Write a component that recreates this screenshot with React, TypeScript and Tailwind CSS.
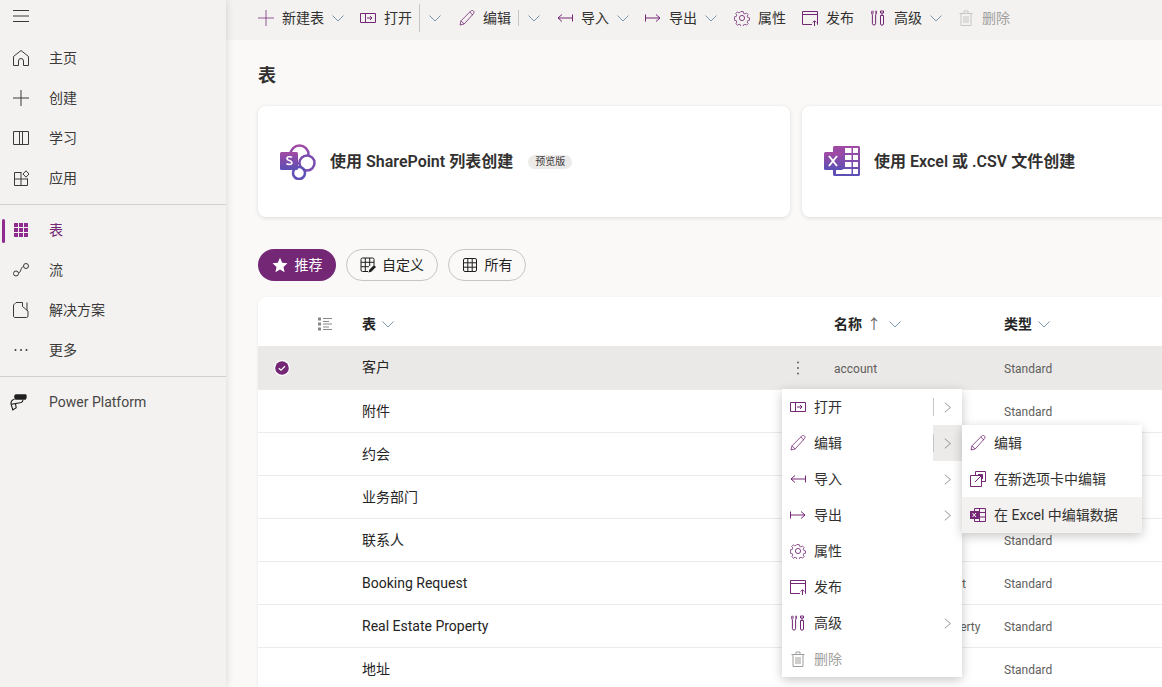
import React from 'react'

const P = '#742774'

type IconProps = { color?: string; className?: string }

const Svg = ({ children, className = 'w-4 h-4', size = 16 }: { children: React.ReactNode; className?: string; size?: number }) => (
  <svg viewBox={`0 0 ${size} ${size}`} fill="none" className={`${className} shrink-0`}>
    {children}
  </svg>
)

const Chevron = ({ className = 'w-3 h-3' }: { className?: string }) => (
  <svg viewBox="0 0 12 12" fill="none" className={`${className} shrink-0`}>
    <path d="M0.5 3.5 6 9l5.5-5.5" stroke="#6b8ea8" strokeWidth="0.9" />
  </svg>
)

const ChevronRight = () => (
  <svg viewBox="0 0 10 14" fill="none" className="w-[8px] h-[13px] shrink-0">
    <path d="M1 1l7 6-7 6" stroke="#7a7876" strokeWidth="1" />
  </svg>
)

const PlusIcon = ({ color = P }: IconProps) => (
  <Svg>
    <path d="M8 0v16M0 8h16" stroke={color} strokeOpacity="0.75" strokeWidth="1" />
  </Svg>
)
const OpenIcon = ({ color = P }: IconProps) => (
  <Svg>
    <path d="M.5 3.5h15v9H.5zM5.5 3.5v9" stroke={color} strokeWidth="1" />
    <path d="M7 8h5M10 6l2 2-2 2" stroke={color} strokeWidth="1" />
  </Svg>
)
const PencilIcon = ({ color = P }: IconProps) => (
  <Svg>
    <path d="M1 15l1-4.2L11.8 1c.8-.8 2-.8 2.7 0 .7.7.7 1.9 0 2.6L5.2 14 1 15zM2 10.8L5.2 14M10.8 2l3.2 3.2" stroke={color} strokeOpacity="0.8" strokeWidth="1" />
  </Svg>
)
const ImportIcon = ({ color = P }: IconProps) => (
  <Svg>
    <path d="M15.5 4.5v7M15 8H1M5 4.5L1 8l4 3.5" stroke={color} strokeWidth="1" />
  </Svg>
)
const ExportIcon = ({ color = P }: IconProps) => (
  <Svg>
    <path d="M.5 4.5v7M1 8h14M11 4.5L15 8l-4 3.5" stroke={color} strokeWidth="1" />
  </Svg>
)
const GearIcon = ({ color = P }: IconProps) => (
  <Svg>
    <circle cx="8" cy="8" r="2.6" stroke={color} strokeWidth="1" strokeOpacity="0.85" />
    <path
      d="M6.7.8h2.6l.4 2 1.600.7 1.700-1.100 1.800 1.800-1.100 1.700.7 1.600 2 .4v2.600l-2 .4-.7 1.600 1.100 1.700-1.800 1.800-1.700-1.100-1.600.7-.4 2H6.700l-.4-2-1.600-.7-1.700 1.100-1.800-1.800 1.100-1.700-.7-1.600-2-.4V6.700l2-.4.700-1.600L1 3l1.800-1.800 1.700 1.100 1.600-.7z"
      transform="translate(.8 .8) scale(.9)"
      stroke={color}
      strokeOpacity="0.85"
      strokeWidth="1"
    />
  </Svg>
)
const PublishIcon = ({ color = P }: IconProps) => (
  <Svg>
    <path d="M10 14.500H.5v-13h15v13H15M.5 4.500h15" stroke={color} strokeWidth="1" />
    <path d="M12.500 16v-5M10.700 12.500l1.800-1.800 1.800 1.800" stroke={color} strokeWidth="1" />
  </Svg>
)
const ToolsIcon = ({ color = P }: IconProps) => (
  <Svg>
    <path d="M3 .8v3M6 .8v3M2 .8c-.6 1-.6 3 .4 4v9c0 1.600 3.200 1.600 3.200 0v-9c1-1 1-3 .4-4" stroke={color} strokeWidth="1" />
    <path d="M10.500 5.500v8.500c0 1.600 3 1.600 3 0V5.500zM12 5.500V3M10.500 1h3v2h-3z" stroke={color} strokeWidth="1" />
  </Svg>
)
const TrashIcon = ({ color = '#a19f9d' }: IconProps) => (
  <Svg>
    <path d="M1.500 3.500h13M3 3.500V15.500h10V3.500M6 3.500V1h4v2.500M6 6v7M8 6v7M10 6v7" stroke={color} strokeWidth="1" />
  </Svg>
)
const NewTabIcon = () => (
  <Svg>
    <path d="M5.500 4V.5h10v10H12M.5 4.500h11v11H.5z" stroke={P} strokeWidth="1" />
    <path d="M5 11l7-7M8 3.500h4.500V8" stroke={P} strokeWidth="1" />
  </Svg>
)
const ExcelSmallIcon = () => (
  <Svg>
    <path d="M4.500 1.500h11v13h-11zM9.500 1.500v13M4.500 5.500h11M4.500 10h11" stroke={P} strokeWidth="1" />
    <rect x="0" y="4" width="9" height="8" fill={P} />
    <path d="M2.500 6l3.500 4M6 6l-3.500 4" stroke="#fff" strokeWidth="1" />
  </Svg>
)

const navIcon = '#3b3a39'
const NavIcons: Record<string, React.ReactNode> = {
  home: (
    <Svg>
      <path d="M.5 15.500V6.500L8 .5l7.500 6v9h-5v-4.500a2.500 2.500 0 0 0-5 0v4.500z" stroke={navIcon} strokeWidth="1" />
    </Svg>
  ),
  plus: (
    <Svg>
      <path d="M8 0v16M0 8h16" stroke={navIcon} strokeWidth="1" />
    </Svg>
  ),
  book: (
    <Svg>
      <path d="M.5 1.500h15v13H.5zM6.500 1.500v13M9.500 1.500v13" stroke={navIcon} strokeWidth="1" />
    </Svg>
  ),
  apps: (
    <Svg>
      <path d="M8.500 2.500H1.500v13h13V8.500M1.500 9h13M8 2.500v13" stroke={navIcon} strokeWidth="1" />
      <path d="M13 .8L16 4l-3 3.200L10 4z" stroke={navIcon} strokeWidth="1" />
    </Svg>
  ),
  table: (
    <Svg>
      <path
        d="M1.500 1H5v4H1V1.500zM6 1h4v4H6zM11 1h3.500l.5.500V5h-4zM1 6h4v4H1zM6 6h4v4H6zM11 6h4v4h-4zM1 11h4v4H1.500L1 14.500zM6 11h4v4H6zM11 11h4v3.500l-.5.500H11z"
        fill="#8f2a8f"
      />
    </Svg>
  ),
  flow: (
    <Svg>
      <circle cx="3" cy="11.500" r="2.500" stroke={navIcon} strokeWidth="1" />
      <circle cx="13" cy="4" r="2.500" stroke={navIcon} strokeWidth="1" />
      <path d="M5.500 11C8 11 7.500 5 10.500 4.500" stroke={navIcon} strokeWidth="1" />
    </Svg>
  ),
  solution: (
    <Svg>
      <path d="M.5 4V14c0 .8.700 1.500 1.500 1.500h11.500c.8 0 1.500-.7 1.500-1.500V9L9.500 4.500V.5H3L.5 3zM14 .5v8" stroke={navIcon} strokeWidth="1" />
    </Svg>
  ),
  more: (
    <Svg>
      <circle cx="2.500" cy="8" r="1" fill={navIcon} />
      <circle cx="8" cy="8" r="1" fill={navIcon} />
      <circle cx="13.500" cy="8" r="1" fill={navIcon} />
    </Svg>
  ),
  power: (
    <svg viewBox="0 0 16 16" fill="none" className="h-[18px] w-[18px] shrink-0">
      <path d="M5 1h9c1.200 0 1.200 4.500-.5 5H5.500C3.500 6 3 1.500 5 1z" fill="#1f1f1f" />
      <path d="M4 5.500C1.500 6 .5 8 1 10l9-1.500c1-.5 1.500-1.500 1.500-2.500M1 10l1.500 5 3-2-.7-3.800" stroke="#1f1f1f" strokeWidth="1" />
    </svg>
  ),
}

const NavItem = ({ icon, label, active }: { icon: string; label: string; active?: boolean }) => (
  <div className="relative flex h-10 items-center pl-[13px] text-[14px]">
    {active && <span className="absolute left-[2px] top-[9px] h-6 w-[3px] rounded-sm bg-[#8f2a8f]" />}
    {NavIcons[icon]}
    <span className={`ml-[20px] ${active ? 'text-[#742774]' : 'text-[#3b3a39]'}`}>{label}</span>
  </div>
)

const Divider = () => <div className="mb-[5px] mt-[6px] h-px w-full bg-[#d2d0ce]" />

function Sidebar() {
  return (
    <aside className="relative z-10 flex h-full w-[226px] shrink-0 flex-col bg-[#f3f2f1] shadow-[1px_0_7px_rgba(0,0,0,0.12)]">
      <div className="flex h-[38px] items-start pl-[13px] pt-[10px]">
        <svg viewBox="0 0 16 12" fill="none" className="h-3 w-4">
          <path d="M0 .5h16M0 6h16M0 11.500h16" stroke={navIcon} strokeWidth="1" />
        </svg>
      </div>
      <NavItem icon="home" label="主页" />
      <NavItem icon="plus" label="创建" />
      <NavItem icon="book" label="学习" />
      <NavItem icon="apps" label="应用" />
      <Divider />
      <NavItem icon="table" label="表" active />
      <NavItem icon="flow" label="流" />
      <NavItem icon="solution" label="解决方案" />
      <NavItem icon="more" label="更多" />
      <Divider />
      <div className="flex h-10 items-center pl-[10px] text-[14px]">
        {NavIcons.power}
        <span className="ml-[21px] text-[#484644]">Power Platform</span>
      </div>
    </aside>
  )
}

function Toolbar() {
  return (
    <div className="flex h-10 shrink-0 items-start bg-[#f3f2f1] pl-[32px] pt-[4px] text-[14px] text-[#323130]">
      <div className="flex h-7 items-center">
        <PlusIcon />
        <span className="ml-2">新建表</span>
        <span className="ml-2"><Chevron /></span>

        <span className="ml-4"><OpenIcon /></span>
        <span className="ml-2">打开</span>
        <span className="ml-[7px] h-7 w-px bg-[#c8c6c4]" />
        <span className="ml-[9px]"><Chevron /></span>

        <span className="ml-[18px]"><PencilIcon /></span>
        <span className="ml-2">编辑</span>
        <span className="ml-[7px] h-4 w-px bg-[#c8c6c4]" />
        <span className="ml-[9px]"><Chevron /></span>

        <span className="ml-[17px]"><ImportIcon /></span>
        <span className="ml-2">导入</span>
        <span className="ml-2"><Chevron /></span>

        <span className="ml-4"><ExportIcon /></span>
        <span className="ml-2">导出</span>
        <span className="ml-2"><Chevron /></span>

        <span className="ml-[17px]"><GearIcon /></span>
        <span className="ml-2">属性</span>

        <span className="ml-4"><PublishIcon /></span>
        <span className="ml-2">发布</span>

        <span className="ml-4"><ToolsIcon /></span>
        <span className="ml-2">高级</span>
        <span className="ml-2"><Chevron /></span>

        <span className="ml-4"><TrashIcon color="#c8c6c4" /></span>
        <span className="ml-2 text-[#a19f9d]">删除</span>
      </div>
    </div>
  )
}

const SharePointLogo = () => (
  <svg viewBox="0 0 36 36" fill="none" className="h-9 w-9 shrink-0">
    <defs>
      <linearGradient id="sp" x1="0" y1="0" x2="0" y2="1">
        <stop offset="0" stopColor="#a34aa3" />
        <stop offset="1" stopColor="#5a4fb5" />
      </linearGradient>
    </defs>
    <circle cx="19.500" cy="10.500" r="9" stroke="url(#sp)" strokeWidth="2.500" fill="#fff" />
    <circle cx="27" cy="19" r="7.500" stroke="#7a4cb0" strokeWidth="2.500" fill="#fff" />
    <circle cx="19" cy="29" r="6" stroke="#5f50b8" strokeWidth="2.500" fill="#fff" />
    <rect x="0" y="8" width="18" height="18" rx="1.500" fill="url(#sp)" />
    <path d="M12 13.500c-1-1-5-1.200-5 1.200 0 2.300 5 1.500 5 4 0 2.300-4.500 2-5.500.8" stroke="#fff" strokeWidth="1.600" />
  </svg>
)

const ExcelLogo = () => (
  <svg viewBox="0 0 36 32" fill="none" className="h-8 w-9 shrink-0">
    <defs>
      <linearGradient id="xl" x1="0" y1="0" x2="0" y2="1">
        <stop offset="0" stopColor="#a34aa3" />
        <stop offset="1" stopColor="#5a4fb5" />
      </linearGradient>
    </defs>
    <path d="M9 1.500C9 .7 9.700 0 10.500 0h24C35.300 0 36 .7 36 1.500v27c0 .8-.7 1.500-1.500 1.500h-24C9.700 30 9 29.300 9 28.500z" fill="url(#xl)" />
    <path d="M21 2h6.500v5H21zM29 2h5v5h-5zM21 9h6.500v5H21zM29 9h5v5h-5zM21 16h6.500v5H21zM29 16h5v5h-5zM12 23h15.500v5H12zM29 23h5v5h-5z" fill="#fff" />
    <rect x="0" y="6" width="19" height="18" rx="1.500" fill="url(#xl)" />
    <path d="M5 10l8 10M13 10l-8 10" stroke="#fff" strokeWidth="2" />
  </svg>
)

const Card = ({ icon, title, badge }: { icon: React.ReactNode; title: string; badge?: string }) => (
  <div className="flex h-[111px] w-[532px] shrink-0 items-center rounded-lg bg-white pl-[22px] shadow-[0_1px_4px_rgba(0,0,0,0.12)]">
    {icon}
    <span className="ml-[14px] text-[16px] font-semibold text-[#323130]">{title}</span>
    {badge && (
      <span className="ml-[15px] flex h-[14px] w-[44px] items-center justify-center rounded-full bg-[#edebe9] text-[10px] text-[#3b3a39]">
        {badge}
      </span>
    )}
  </div>
)

const GridIcon = () => (
  <Svg>
    <rect x="1.500" y="1.500" width="13" height="13" rx="1.500" stroke="#1f1f1f" strokeWidth="1" />
    <path d="M1.500 5.800h13M1.500 10.200h13M5.800 1.500v13M10.200 1.500v13" stroke="#1f1f1f" strokeWidth="1" />
  </Svg>
)

const CustomGridIcon = () => (
  <Svg>
    <path d="M8 14.500H2.500a1.500 1.500 0 0 1-1.500-1.500V2.500A1.500 1.500 0 0 1 2.500 1h10A1.500 1.500 0 0 1 14 2.500V8M1 5.300h13M1 9.700h8M5.300 1v13M9.700 1v8" stroke="#1f1f1f" strokeWidth="1" />
    <path d="M8.500 15.500l.8-2.800 4.700-4.700 2 2-4.700 4.700z" fill="#1f1f1f" />
  </Svg>
)

function Pills() {
  return (
    <div className="mt-8 flex gap-[10px] pl-[32px] text-[14px]">
      <div className="flex h-8 w-[78px] items-center justify-center gap-[7px] rounded-full bg-[#742774] text-white">
        <svg viewBox="0 0 16 16" className="h-4 w-4"><path d="M8 .8l2.200 4.900 5.300.6-4 3.600 1.100 5.300L8 12.500l-4.600 2.700 1.100-5.300-4-3.600 5.300-.6z" fill="#fff" /></svg>
        <span>推荐</span>
      </div>
      <div className="flex h-8 w-[92px] items-center justify-center gap-[6px] rounded-full border border-[#c8c6c4] text-[#242424]">
        <CustomGridIcon />
        <span>自定义</span>
      </div>
      <div className="flex h-8 w-[78px] items-center justify-center gap-[7px] rounded-full border border-[#c8c6c4] text-[#242424]">
        <GridIcon />
        <span>所有</span>
      </div>
    </div>
  )
}

const rows = [
  { name: '客户', logical: 'account', selected: true },
  { name: '附件', logical: 'attachment' },
  { name: '约会', logical: 'appointment' },
  { name: '业务部门', logical: 'businessunit' },
  { name: '联系人', logical: 'contact' },
  { name: 'Booking Request', logical: 'cr1a2c3_bookingrequest' },
  { name: 'Real Estate Property', logical: 'cr1a2c3_realestateproperty' },
  { name: '地址', logical: 'customeraddress' },
]

function Table() {
  return (
    <div className="ml-[32px] mt-4 w-[1000px] rounded-t-lg bg-white shadow-[0_1px_3px_rgba(0,0,0,0.08)]">
      <div className="flex h-[49px] items-center pt-[5px] text-[14px] font-semibold text-[#242424]">
        <div className="flex w-[104px] justify-end pr-[30px]">
          <svg viewBox="0 0 14 14" fill="none" className="h-[14px] w-[14px]">
            <path d="M0 .5h3v3H0zM0 5.500h3v3H0zM0 10.500h3v3H0z" fill="#8a8886" />
            <path d="M5 1.500h9M5 4.500h6M5 7h9M5 10h6M5 12.500h9" stroke="#8a8886" strokeWidth="1" />
          </svg>
        </div>
        <div className="flex w-[472px] items-center gap-[6px]">
          <span>表</span>
          <Chevron />
        </div>
        <div className="flex w-[170px] items-center">
          <span>名称</span>
          <span className="ml-[5px] font-normal text-[#605e5c]">↑</span>
          <span className="ml-[8px]"><Chevron /></span>
        </div>
        <div className="flex items-center gap-[6px]">
          <span>类型</span>
          <Chevron />
        </div>
      </div>
      {rows.map((row) => (
        <div
          key={row.name}
          className={`flex h-[43px] items-center ${row.selected ? 'bg-[#ebe9e7]' : 'border-t border-[#edebe9]'}`}
        >
          <div className="flex w-[104px] pl-[16px]">
            {row.selected && (
              <svg viewBox="0 0 16 16" className="h-4 w-4">
                <circle cx="8" cy="8" r="8" fill="#fff" />
                <circle cx="8" cy="8" r="6.800" fill={P} />
                <path d="M4.800 8.200l2.200 2 4-4" stroke="#fff" strokeWidth="1.300" fill="none" />
              </svg>
            )}
          </div>
          <div className="flex w-[448px] items-center justify-between text-[14px] text-[#242424]">
            <span>{row.name}</span>
            {row.selected && (
              <svg viewBox="0 0 24 16" className="h-4 w-6">
                <circle cx="12" cy="2.500" r="1" fill="#605e5c" />
                <circle cx="12" cy="8" r="1" fill="#605e5c" />
                <circle cx="12" cy="13.500" r="1" fill="#605e5c" />
              </svg>
            )}
          </div>
          <div className="ml-[24px] w-[170px] whitespace-nowrap pt-[2px] text-[12px] text-[#605e5c]">{row.logical}</div>
          <div className="pt-[2px] text-[12px] text-[#605e5c]">Standard</div>
        </div>
      ))}
    </div>
  )
}

const MenuRow = ({
  icon,
  label,
  chevron,
  split,
  open,
  disabled,
  hover,
}: {
  icon: React.ReactNode
  label: string
  chevron?: boolean
  split?: boolean
  open?: boolean
  disabled?: boolean
  hover?: boolean
}) => (
  <div className={`flex h-9 items-center pl-2 text-[14px] ${hover ? 'bg-[#f3f2f1]' : ''}`}>
    {icon}
    <span className={`ml-2 flex-1 ${disabled ? 'text-[#a19f9d]' : 'text-[#323130]'}`}>{label}</span>
    {chevron && (
      <div className={`flex h-9 w-[29px] items-center ${open ? 'bg-[#edebe9]' : ''}`}>
        <span className={`h-[18px] w-px ${split ? 'bg-[#c8c6c4]' : ''}`} />
        <span className="ml-[10px]"><ChevronRight /></span>
      </div>
    )}
  </div>
)

function ContextMenu() {
  return (
    <div className="absolute left-[556px] top-[389px] z-20 w-[180px] bg-white shadow-[0_3px_10px_rgba(0,0,0,0.22)]">
      <MenuRow icon={<OpenIcon />} label="打开" chevron split />
      <MenuRow icon={<PencilIcon />} label="编辑" chevron split open />
      <MenuRow icon={<ImportIcon />} label="导入" chevron />
      <MenuRow icon={<ExportIcon />} label="导出" chevron />
      <MenuRow icon={<GearIcon />} label="属性" />
      <MenuRow icon={<PublishIcon />} label="发布" />
      <MenuRow icon={<ToolsIcon />} label="高级" chevron />
      <MenuRow icon={<TrashIcon />} label="删除" disabled />

      <div className="absolute left-[180px] top-[36px] w-[180px] bg-white shadow-[0_3px_10px_rgba(0,0,0,0.22)]">
        <MenuRow icon={<PencilIcon />} label="编辑" />
        <MenuRow icon={<NewTabIcon />} label="在新选项卡中编辑" />
        <MenuRow icon={<ExcelSmallIcon />} label="在 Excel 中编辑数据" hover />
      </div>
    </div>
  )
}

export default function App() {
  return (
    <div
      className="flex h-screen w-full overflow-hidden bg-[#faf9f8]"
      style={{ fontFamily: 'Roboto, "Noto Sans CJK SC", sans-serif' }}
    >
      <Sidebar />
      <main className="relative flex min-w-0 flex-1 flex-col overflow-hidden">
        <Toolbar />
        <h1 className="mt-[21px] h-[29px] pl-[32px] text-[18px] font-semibold leading-[29px] text-[#323130]">表</h1>
        <div className="mt-4 flex gap-3 pl-[32px]">
          <Card icon={<SharePointLogo />} title="使用 SharePoint 列表创建" badge="预览版" />
          <Card icon={<ExcelLogo />} title="使用 Excel 或 .CSV 文件创建" />
        </div>
        <Pills />
        <Table />
        <ContextMenu />
      </main>
    </div>
  )
}
